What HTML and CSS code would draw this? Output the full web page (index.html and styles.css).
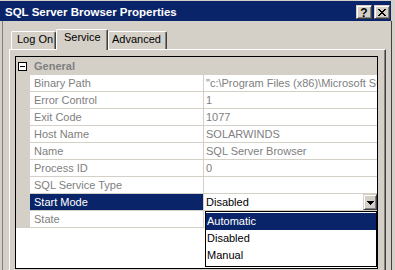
FILE: index.html
```html
<!DOCTYPE html>
<html>
<head>
<meta charset="utf-8">
<link rel="stylesheet" href="styles.css">
</head>
<body>
<div class="win">
  <div class="titlebar">
    <span class="title">SQL Server Browser Properties</span>
    <div class="tbtns">
      <span class="tbtn help">?</span>
      <span class="tbtn close"><svg width="8" height="7" viewBox="0 0 8 7" shape-rendering="crispEdges"><path d="M0 0h2v1h-2zM6 0h2v1h-2zM1 1h2v1h-2zM5 1h2v1h-2zM2 2h4v1h-4zM3 3h2v1h-2zM2 4h4v1h-4zM1 5h2v1h-2zM5 5h2v1h-2zM0 6h2v1h-2zM6 6h2v1h-2z" fill="#000"/></svg></span>
    </div>
  </div>
  <div class="client">
    <div class="frame">
      <div class="tabs">
        <div class="tab t1">Log On</div>
        <div class="tab t2 sel">Service</div>
        <div class="tab t3">Advanced</div>
      </div>
      <div class="panel">
        <div class="grid">
          <div class="cat"><span class="toggle"><span class="minus"></span></span><span class="catname">General</span></div>
          <div class="row"><span class="gut"></span><span class="name">Binary Path</span><span class="val">"c:\Program Files (x86)\Microsoft SQL Server\90\Shared\sqlbrowser.exe"</span></div>
          <div class="row"><span class="gut"></span><span class="name">Error Control</span><span class="val">1</span></div>
          <div class="row"><span class="gut"></span><span class="name">Exit Code</span><span class="val">1077</span></div>
          <div class="row"><span class="gut"></span><span class="name">Host Name</span><span class="val">SOLARWINDS</span></div>
          <div class="row"><span class="gut"></span><span class="name">Name</span><span class="val">SQL Server Browser</span></div>
          <div class="row"><span class="gut"></span><span class="name">Process ID</span><span class="val">0</span></div>
          <div class="row"><span class="gut"></span><span class="name">SQL Service Type</span><span class="val"></span></div>
          <div class="row sel"><span class="gut"></span><span class="name">Start Mode</span><span class="val edit"><span class="etext">Disabled</span><span class="ddbtn"><svg width="7" height="4" viewBox="0 0 7 4" shape-rendering="crispEdges"><path d="M0 0h7v1h-7zM1 1h5v1h-5zM2 2h3v1h-3zM3 3h1v1h-1z" fill="#000"/></svg></span></span></div>
          <div class="row"><span class="gut"></span><span class="name">State</span><span class="val"></span></div>
          <div class="ddlist">
            <div class="item hi">Automatic</div>
            <div class="item">Disabled</div>
            <div class="item">Manual</div>
          </div>
        </div>
      </div>
    </div>
  </div>
</div>
</body>
</html>
```

FILE: styles.css
```css
* { box-sizing: border-box; }
html, body { margin: 0; padding: 0; }
body {
  width: 395px;
  height: 270px;
  overflow: hidden;
  background: #d4d0c8;
  font-family: "Liberation Sans", Arial, sans-serif;
  font-size: 11px;
  color: #000;
}
.win {
  width: 392px;
  height: 270px;
  padding-top: 1px;
  display: flex;
  flex-direction: column;
}
.titlebar {
  height: 20px;
  width: 391px;
  flex: none;
  background: #0a246a;
  display: flex;
  align-items: flex-start;
  padding: 0 1px 0 5px;
}
.title {
  flex: 1;
  color: #fff;
  font-weight: bold;
  font-size: 11.5px;
  line-height: 13px;
  padding-top: 5px;
  white-space: nowrap;
}
.tbtns {
  display: flex;
  gap: 2px;
  margin-top: 4px;
}
.tbtn {
  width: 16px;
  height: 14px;
  background: #d4d0c8;
  border: 1px solid;
  border-color: #d4d0c8 #404040 #404040 #d4d0c8;
  box-shadow: inset 1px 1px #fff, inset -1px -1px #808080;
  display: flex;
  align-items: center;
  justify-content: center;
}
.help {
  font-weight: bold;
  font-size: 12px;
  line-height: 12px;
  padding-top: 1px;
}
.client {
  flex: 1;
  width: 392px;
  border-right: 1px solid #404040;
  padding: 0 5px 0 2px;
  overflow: hidden;
}
.frame {
  height: 100%;
  border-left: 1px solid #808080;
  padding: 8px 0 0 6px;
  display: flex;
  flex-direction: column;
}
.tabs {
  display: flex;
  align-items: flex-end;
  height: 20px;
  padding-left: 2px;
  position: relative;
  z-index: 1;
  flex: none;
}
.tab {
  height: 18px;
  border-top: 1px solid #fff;
  border-left: 1px solid #fff;
  border-right: 1px solid #404040;
  box-shadow: inset -1px 0 #808080;
  border-radius: 2px 2px 0 0;
  line-height: 15px;
  white-space: nowrap;
  background: #d4d0c8;
}
.t1 { width: 45px; padding-left: 5px; }
.t2 { width: 52px; padding-left: 7px; }
.t3 { width: 59px; padding-left: 3px; }
.tab.sel {
  height: 21px;
  margin-bottom: -1px;
}
.panel {
  flex: 1;
  border-top: 1px solid #fff;
  border-left: 1px solid #fff;
  border-right: 1px solid #404040;
  box-shadow: inset -1px 0 #808080;
  padding: 6px 7px 0 5px;
}
.grid {
  position: relative;
  width: 363px;
  height: 213px;
  border: 1px solid #000;
  background: #fff;
  color: #808080;
}
.cat {
  height: 18px;
  background: #d4d0c8;
  display: flex;
  align-items: center;
}
.toggle {
  width: 9px;
  height: 9px;
  margin-left: 2px;
  border: 1px solid #000;
  background: #fff;
  display: flex;
  align-items: center;
  justify-content: center;
}
.minus {
  width: 5px;
  height: 1px;
  background: #000;
}
.catname {
  margin-left: 7px;
  font-weight: bold;
  line-height: 16px;
}
.row {
  display: flex;
  height: 17px;
  line-height: 16px;
  white-space: nowrap;
}
.gut {
  width: 14px;
  flex: none;
  background: #d4d0c8;
}
.name {
  width: 174px;
  flex: none;
  padding-left: 4px;
  border-right: 1px solid #d4d0c8;
  border-bottom: 1px solid #d4d0c8;
  overflow: hidden;
}
.val {
  flex: 1;
  min-width: 0;
  padding-left: 2px;
  border-bottom: 1px solid #d4d0c8;
  overflow: hidden;
}
.row.sel .name {
  background: #0a246a;
  color: #fff;
}
.val.edit {
  display: flex;
  color: #000;
  padding-right: 0;
}
.etext { flex: 1; }
.ddbtn {
  width: 14px;
  height: 16px;
  flex: none;
  background: #d4d0c8;
  border: 1px solid;
  border-color: #d4d0c8 #404040 #404040 #d4d0c8;
  box-shadow: inset 1px 1px #fff, inset -1px -1px #808080;
  display: flex;
  align-items: center;
  justify-content: center;
  padding-top: 1px;
}
.ddbtn svg { display: block; }
.ddlist {
  position: absolute;
  left: 189px;
  top: 154px;
  width: 172px;
  height: 56px;
  border: 1px solid #000;
  background: #fff;
  color: #000;
  padding-top: 1px;
}
.item {
  height: 17px;
  line-height: 17px;
  padding-left: 1px;
}
.item.hi {
  background: #0a246a;
  color: #fff;
}
```
